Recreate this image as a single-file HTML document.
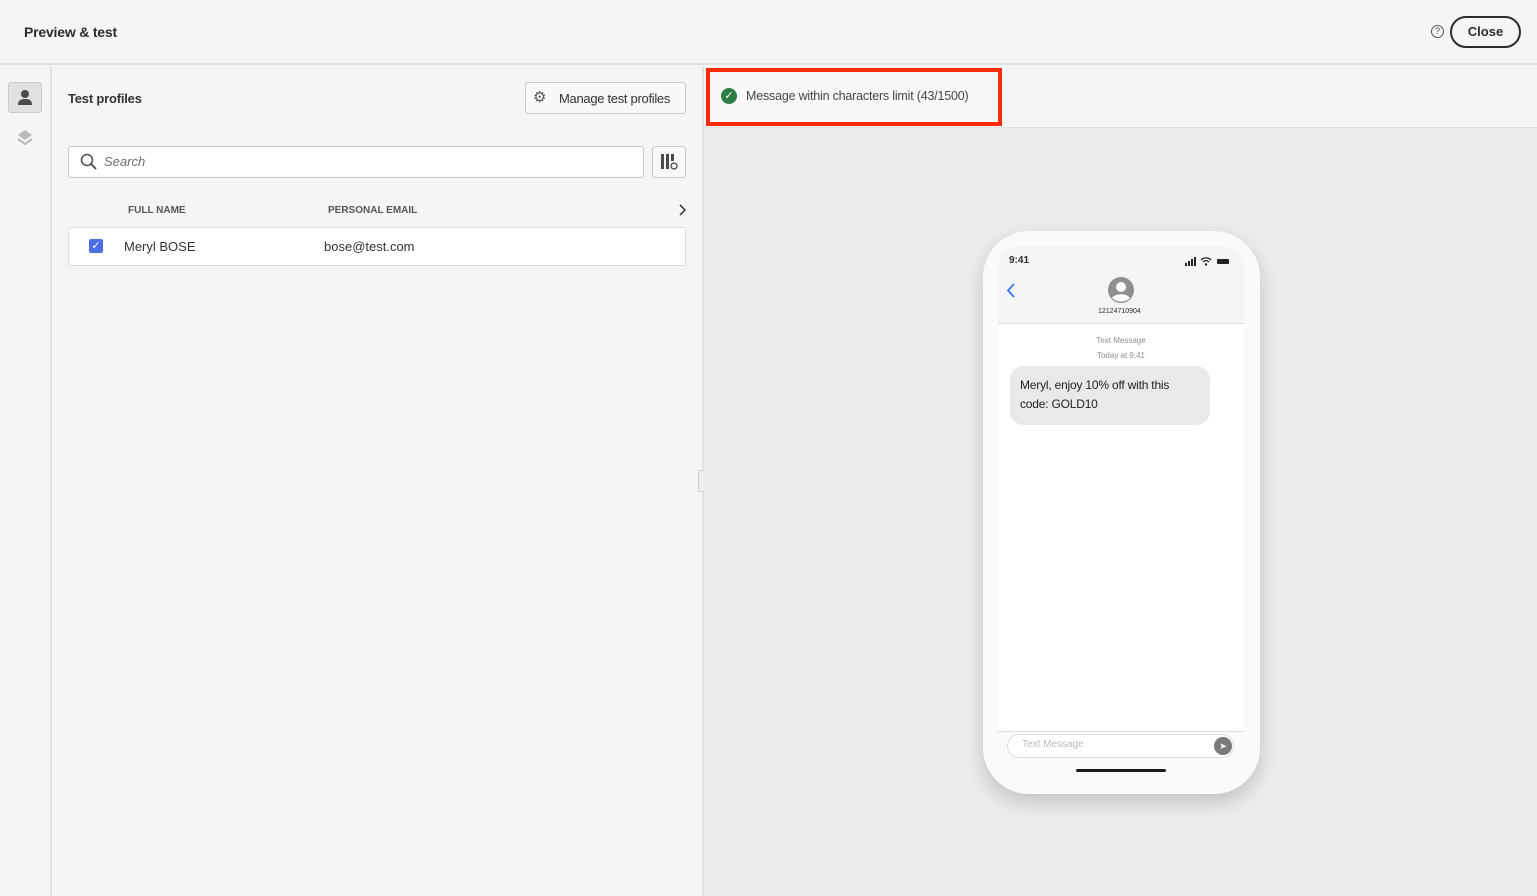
<!DOCTYPE html>
<html><head><style>
*{box-sizing:border-box;margin:0;padding:0}
body{width:1537px;height:896px;background:#f5f5f5;font-family:"Liberation Sans",sans-serif;color:#2c2c2c;position:relative;overflow:hidden}
.a{position:absolute}
</style></head><body>
<div class="a" style="left:0;top:0;width:1537px;height:65px;background:#f5f5f5;border-bottom:2px solid #e1e1e1"></div>
<div class="a" style="left:24px;top:24px;font-size:14px;font-weight:bold;color:#2c2c2c;letter-spacing:-0.2px">Preview &amp; test</div>
<div class="a" style="left:1431px;top:25px;width:13px;height:13px;border:1px solid #555;border-radius:50%;font-size:9px;text-align:center;line-height:11px;color:#555">?</div>
<div class="a" style="left:1450px;top:16px;width:71px;height:32px;border:2px solid #2c2c2c;border-radius:16px;font-size:13px;font-weight:bold;text-align:center;line-height:28px">Close</div>
<!-- rail -->
<div class="a" style="left:0;top:67px;width:52px;height:829px;border-right:2px solid #e1e1e1;background:#f5f5f5"></div>
<div class="a" style="left:8px;top:82px;width:34px;height:31px;background:#e1e1e1;border:1px solid #cacaca;border-radius:3px"></div>
<svg class="a" style="left:17px;top:89px" width="16" height="17" viewBox="0 0 16 17"><circle cx="8" cy="5" r="4" fill="#4b4b4b"/><path d="M1 16c0-5 3-6 7-6s7 1 7 6z" fill="#4b4b4b"/></svg>
<svg class="a" style="left:16px;top:129px" width="18" height="18" viewBox="0 0 18 18"><path d="M9 1l7 5-7 5-7-5z" fill="#bbb"/><path d="M2 10l7 5 7-5" fill="none" stroke="#bbb" stroke-width="2"/></svg>
<!-- left panel -->
<div class="a" style="left:702px;top:67px;width:2px;height:829px;background:#e1e1e1"></div>
<div class="a" style="left:698px;top:470px;width:9px;height:22px;border:1px solid #d0d0d0;background:#eee;border-radius:2px"></div>
<div class="a" style="left:68px;top:91px;font-size:13px;font-weight:bold;color:#323232;letter-spacing:-0.2px">Test profiles</div>
<div class="a" style="left:525px;top:82px;width:161px;height:32px;border:1px solid #cacaca;border-radius:3px;background:#f8f8f8"></div>
<div class="a" style="left:533px;top:88px;font-size:15px;color:#555">⚙</div>
<div class="a" style="left:559px;top:91px;font-size:13px;color:#323232;letter-spacing:-0.3px">Manage test profiles</div>
<div class="a" style="left:68px;top:146px;width:576px;height:32px;border:1px solid #c8c8c8;border-radius:3px;background:#fff"></div>
<svg class="a" style="left:80px;top:153px" width="18" height="18" viewBox="0 0 18 18"><circle cx="7" cy="7" r="5.5" fill="none" stroke="#4b4b4b" stroke-width="1.5"/><path d="M11 11l5 5" stroke="#4b4b4b" stroke-width="1.8"/></svg>
<div class="a" style="left:104px;top:154px;font-size:13px;font-style:italic;color:#6e6e6e">Search</div>
<div class="a" style="left:652px;top:146px;width:34px;height:32px;border:1px solid #cacaca;border-radius:3px;background:#f8f8f8"></div>
<svg class="a" style="left:660px;top:153px" width="18" height="18" viewBox="0 0 18 18"><rect x="1" y="1" width="3" height="15" fill="#4b4b4b"/><rect x="6" y="1" width="3" height="15" fill="#4b4b4b"/><rect x="11" y="1" width="3" height="7" fill="#4b4b4b"/><circle cx="14" cy="13" r="3" fill="none" stroke="#4b4b4b" stroke-width="1.3"/></svg>
<div class="a" style="left:128px;top:205px;font-size:10px;font-weight:bold;color:#555">FULL NAME</div>
<div class="a" style="left:328px;top:205px;font-size:10px;font-weight:bold;color:#555">PERSONAL EMAIL</div>
<svg class="a" style="left:678px;top:204px" width="10" height="12" viewBox="0 0 10 12"><path d="M2 1l5 5-5 5" fill="none" stroke="#444" stroke-width="1.6"/></svg>
<div class="a" style="left:68px;top:227px;width:618px;height:39px;border:1px solid #dcdcdc;border-radius:3px;background:#fff"></div>
<div class="a" style="left:89px;top:239px;width:14px;height:14px;background:#4b6fe0;border-radius:2px;color:#fff;font-size:11px;text-align:center;line-height:14px">✓</div>
<div class="a" style="left:124px;top:239px;font-size:13px;color:#323232">Meryl BOSE</div>
<div class="a" style="left:324px;top:239px;font-size:13px;color:#323232">bose@test.com</div>
<!-- right -->
<div class="a" style="left:704px;top:127px;width:833px;height:769px;background:#ececec;border-top:1px solid #e0e0e0"></div>
<div class="a" style="left:706px;top:68px;width:296px;height:58px;border:4px solid #fb2a0a;background:#f8f8f8"></div>
<div class="a" style="left:721px;top:88px;width:16px;height:16px;border-radius:50%;background:#2d7d46;color:#fff;font-size:11px;text-align:center;line-height:16px">✓</div>
<div class="a" style="left:746px;top:89px;font-size:12.5px;color:#464646;letter-spacing:-0.2px">Message within characters limit (43/1500)</div>
<!-- phone -->
<div class="a" style="left:983px;top:231px;width:277px;height:563px;background:#fafafa;border-radius:46px;box-shadow:0 8px 20px rgba(0,0,0,.18)"></div>
<div class="a" style="left:998px;top:246px;width:246px;height:486px;background:#fff;border-radius:22px 22px 0 0;overflow:hidden">
 <div style="height:78px;background:#f5f5f5;border-bottom:1px solid #ddd"></div>
</div>
<div class="a" style="left:1009px;top:255px;font-size:10px;font-weight:bold">9:41</div>
<svg class="a" style="left:1185px;top:257px" width="46" height="9" viewBox="0 0 46 9"><rect x="0" y="6" width="2" height="3" fill="#222"/><rect x="3" y="4" width="2" height="5" fill="#222"/><rect x="6" y="2" width="2" height="7" fill="#222"/><rect x="9" y="0" width="2" height="9" fill="#222"/><path d="M16 3a7 7 0 0 1 10 0M18 5a4 4 0 0 1 6 0" fill="none" stroke="#222" stroke-width="1.3"/><circle cx="21" cy="7.5" r="1.2" fill="#222"/><rect x="32" y="2" width="12" height="5" rx="1" fill="#222"/></svg>
<svg class="a" style="left:1006px;top:283px" width="10" height="15" viewBox="0 0 10 15"><path d="M8 1L2 7.5 8 14" fill="none" stroke="#3478f6" stroke-width="1.8"/></svg>
<svg class="a" style="left:1108px;top:277px" width="26" height="26" viewBox="0 0 26 26"><circle cx="13" cy="13" r="13" fill="#8e8e93"/><circle cx="13" cy="10" r="5" fill="#fff"/><path d="M4 21c3-5 15-5 18 0a13 13 0 0 1-18 0z" fill="#fff"/></svg>
<div class="a" style="left:1098px;top:308px;font-size:7px">12124710904</div>
<div class="a" style="left:998px;top:333px;width:246px;text-align:center;font-size:8px;color:#8e8e93;line-height:15px">Text Message<br>Today at 9:41</div>
<div class="a" style="left:1010px;top:366px;width:200px;height:59px;background:#e9e9eb;border-radius:14px;padding:10px;font-size:12px;line-height:19px;color:#222;letter-spacing:-0.2px">Meryl, enjoy 10% off with this code: GOLD10</div>
<div class="a" style="left:998px;top:731px;width:246px;height:1px;background:#ddd"></div>
<div class="a" style="left:1007px;top:734px;width:227px;height:24px;border:1px solid #ddd;border-radius:12px;background:#fff"></div>
<div class="a" style="left:1022px;top:739px;font-size:10px;color:#bbb">Text Message</div>
<div class="a" style="left:1214px;top:737px;width:18px;height:18px;border-radius:50%;background:#7a7a7a;color:#fff;font-size:9px;text-align:center;line-height:18px">➤</div>
<div class="a" style="left:1076px;top:769px;width:90px;height:3px;background:#1c1c1c;border-radius:2px"></div>
</body></html>
